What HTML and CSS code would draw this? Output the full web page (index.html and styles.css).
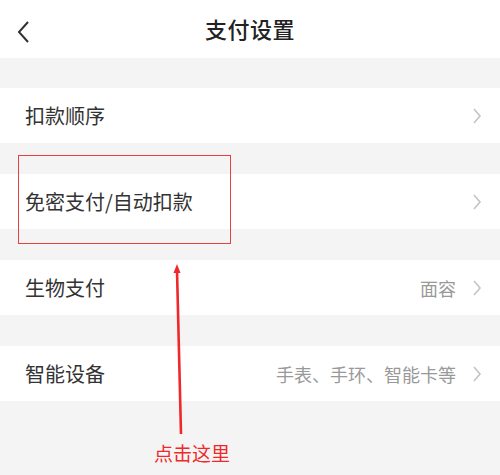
FILE: index.html
```html
<!DOCTYPE html>
<html lang="zh-CN">
<head>
  <meta charset="UTF-8">
  <meta name="viewport" content="width=device-width, initial-scale=1.0">
  <title>支付设置</title>
  <link rel="stylesheet" href="styles.css">
</head>
<body>
  <div class="screen">
    <header class="nav-bar">
      <span class="nav-back">
        <svg width="16" height="24" viewBox="0 0 16 24"><polyline points="12,2 3,12 12,22" fill="none" stroke="#333" stroke-width="2"/></svg>
      </span>
      <h1 class="nav-title">支付设置</h1>
    </header>

    <div class="group">
      <div class="cell">
        <span class="cell-label">扣款顺序</span>
        <span class="cell-arrow"><svg width="10" height="18" viewBox="0 0 10 18"><polyline points="2,2 8,9 2,16" fill="none" stroke="#c4c4c4" stroke-width="1.6"/></svg></span>
      </div>
    </div>

    <div class="group">
      <div class="cell">
        <span class="cell-label">免密支付/自动扣款</span>
        <span class="cell-arrow"><svg width="10" height="18" viewBox="0 0 10 18"><polyline points="2,2 8,9 2,16" fill="none" stroke="#c4c4c4" stroke-width="1.6"/></svg></span>
      </div>
    </div>

    <div class="group">
      <div class="cell">
        <span class="cell-label">生物支付</span>
        <span class="cell-value">面容</span>
        <span class="cell-arrow"><svg width="10" height="18" viewBox="0 0 10 18"><polyline points="2,2 8,9 2,16" fill="none" stroke="#c4c4c4" stroke-width="1.6"/></svg></span>
      </div>
    </div>

    <div class="group">
      <div class="cell">
        <span class="cell-label">智能设备</span>
        <span class="cell-value">手表、手环、智能卡等</span>
        <span class="cell-arrow"><svg width="10" height="18" viewBox="0 0 10 18"><polyline points="2,2 8,9 2,16" fill="none" stroke="#c4c4c4" stroke-width="1.6"/></svg></span>
      </div>
    </div>

    <!-- annotation overlay -->
    <div class="mark-box"></div>
    <svg class="mark-arrow" width="20" height="175" viewBox="0 0 20 175">
      <line x1="7" y1="6" x2="11" y2="170" stroke="#f0282a" stroke-width="2.6"/>
      <polygon points="7,0 3.5,9 10.5,9" fill="#f0282a"/>
    </svg>
    <div class="mark-label">点击这里</div>
  </div>
</body>
</html>
```

FILE: styles.css
```css
* {
  box-sizing: border-box;
}

body {
  margin: 0;
  font-family: "Noto Sans CJK SC", "Noto Sans", sans-serif;
  background-color: #f4f4f4;
  color: #333;
}

.screen {
  position: relative;
  width: 500px;
  height: 475px;
  overflow: hidden;
  background-color: #f4f4f4;
}

.nav-bar {
  height: 58px;
  background-color: #fff;
  display: flex;
  align-items: center;
  justify-content: center;
  position: relative;
}

.nav-back {
  position: absolute;
  left: 16px;
  top: 20px;
  display: flex;
}

.nav-title {
  margin: 0;
  font-size: 22px;
  font-weight: 500;
  color: #222;
  line-height: 1;
  padding-bottom: 8px;
  padding-top: 6px;
  letter-spacing: 0.5px;
}

.group {
  margin-top: 30px;
  background-color: #fff;
}

.group + .group {
  margin-top: 31px;
}

.cell {
  height: 55px;
  display: flex;
  align-items: center;
  padding: 0 18px 0 25px;
}

.cell-label {
  flex: 1;
  font-size: 20px;
  color: #333;
}

.cell-value {
  font-size: 18px;
  color: #999;
  margin-right: 16px;
}

.cell-arrow {
  display: flex;
}

.mark-box {
  position: absolute;
  left: 18px;
  top: 155px;
  width: 213px;
  height: 89px;
  border: 1.5px solid #e8403e;
}

.mark-arrow {
  position: absolute;
  left: 170px;
  top: 264px;
}

.mark-label {
  position: absolute;
  left: 154px;
  top: 440px;
  font-size: 19px;
  line-height: 26px;
  color: #f0282a;
}
```
